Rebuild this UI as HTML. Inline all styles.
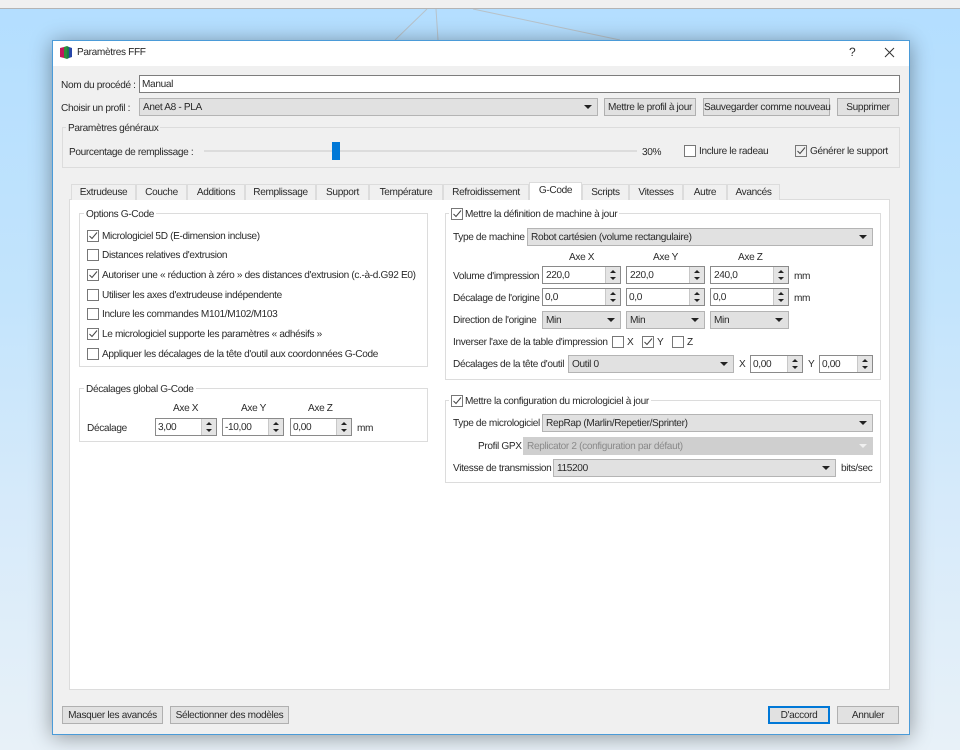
<!DOCTYPE html>
<html lang="fr"><head><meta charset="utf-8"><title>Paramètres FFF</title>
<style>
*{box-sizing:border-box}
html{margin:0;padding:0;background:#b5dfff}
body{margin:0;padding:0;width:960px;height:750px;position:relative;overflow:hidden;font:10.1px/16px "Liberation Sans",sans-serif;letter-spacing:-.35px;text-rendering:geometricPrecision;color:#2a2a2a;background:linear-gradient(180deg,#b3deff 0,#c3e4fc 300px,#d6eafa 500px,#e8f1f8 750px);filter:blur(.3px)}
#top{position:absolute;left:0;top:0;width:960px;height:9px;background:#f0f0f0;border-bottom:1px solid #b4b4b4}
#dlg{position:absolute;left:52px;top:40px;width:858px;height:695px;background:#f0f0f0;box-shadow:0 2px 20px rgba(0,0,0,.38)}
#bd{position:absolute;left:52px;top:40px;width:858px;height:695px;border:1px solid #4b9bd8;z-index:5}
#tb{position:absolute;left:53px;top:41px;width:856px;height:25px;background:#fff}
.a{position:absolute}
.t{position:absolute;white-space:nowrap;height:14px}
.g{position:absolute;border:1px solid #dcdcdc}
.gt{position:absolute;white-space:nowrap;height:14px;background:#f0f0f0;padding:0 2px}
.w{background:#fff}
.in{position:absolute;background:#fff;border:1px solid #7d7d7d;height:18px;padding:1px 0 0 2px;white-space:nowrap}
.c{position:absolute;background:#e1e1e1;border:1px solid #b4b4b4;height:18px;padding:1px 0 0 3px;white-space:nowrap}
.c:after{content:"";position:absolute;right:5px;top:6px;border:4px solid transparent;border-top:4px solid #222;border-bottom:0}
.c.d{color:#8a8a8a;background:#cfcfcf;border-color:#cfcfcf}
.c.d:after{border-top-color:#f0f0f0}
.b{position:absolute;background:#e1e1e1;border:1px solid #b0b0b0;height:18px;text-align:center;padding-top:1px;white-space:nowrap}
.s{position:absolute;background:#fff;border:1px solid #8a8a8a;height:18px;padding:1px 0 0 2px;white-space:nowrap}
.s:after{content:"";position:absolute;right:0;top:0;bottom:0;width:14px;background:#e4e4e4;border-left:1px solid #c8c8c8}
.s i{position:absolute;right:4px;z-index:1;border:3px solid transparent}
.s i.u{top:3px;border-bottom:3px solid #222;border-top:0}
.s i.o{bottom:3px;border-top:3px solid #222;border-bottom:0}
.k{position:absolute;width:12px;height:12px;background:#fff;border:1px solid #777}
.k.on svg{position:absolute;left:0;top:0}
.k.bg{background:#f0f0f0}
.tab{position:absolute;top:184px;height:16px;background:#f0f0f0;border:1px solid #dcdcdc;border-bottom:0;margin-left:-1px;text-align:center;white-space:nowrap;padding-top:0}
</style></head><body>
<div id="top"></div>
<svg class="a" style="left:0;top:9px" width="960" height="32"><path d="M427 0L395 31M436 0L438 31M473 0L620 31" stroke="#b8c2c9" stroke-width="1" fill="none"/></svg>
<div id="dlg"></div><div id="tb"></div><div id="bd"></div>

<svg class="a" style="left:60px;top:46px" width="13" height="13"><path d="M0 2L4 1V12L0 11Z" fill="#c2185b"/><path d="M4 1L7 0V13L4 12Z" fill="#2f8f3a"/><path d="M7 0L9 1V12L7 13Z" fill="#1b7d4a"/><path d="M9 1L12 2V11L9 12Z" fill="#2746a8"/></svg>
<div class="t" style="left:77px;top:45px">Paramètres FFF</div>
<div class="t" style="left:849px;top:44px;font-size:12px">?</div>
<svg class="a" style="left:884px;top:47px" width="11" height="11"><path d="M1 1L10 10M10 1L1 10" stroke="#333" stroke-width="1" fill="none"/></svg>

<div class="t" style="left:61px;top:78px">Nom du procédé :</div>
<div class="in" style="left:139px;top:75px;width:761px">Manual</div>
<div class="t" style="left:61px;top:101px">Choisir un profil :</div>
<div class="c" style="left:139px;top:98px;width:459px;padding-left:3px">Anet A8 - PLA</div>
<div class="b" style="left:604px;top:98px;width:92px">Mettre le profil à jour</div>
<div class="b" style="left:703px;top:98px;width:127px">Sauvegarder comme nouveau</div>
<div class="b" style="left:837px;top:98px;width:62px">Supprimer</div>

<div class="g" style="left:62px;top:127px;width:838px;height:41px"></div>
<div class="gt" style="left:66px;top:121px">Paramètres généraux</div>
<div class="t" style="left:69px;top:145px">Pourcentage de remplissage :</div>
<div class="a" style="left:204px;top:150px;width:433px;height:2px;background:#dcdcdc"></div>
<div class="a" style="left:332px;top:142px;width:8px;height:18px;background:#0078d7"></div>
<div class="t" style="left:642px;top:145px">30%</div>
<div class="k" style="left:684px;top:145px"></div>
<div class="t" style="left:699px;top:144px">Inclure le radeau</div>
<div class="k on bg" style="left:795px;top:145px"><svg width="10" height="10"><path d="M1.5 5L4 7.5L9 1.5" stroke="#444" fill="none"/></svg></div>
<div class="t" style="left:810px;top:144px">Générer le support</div>

<div class="a w" style="left:69px;top:199px;width:821px;height:491px;border:1px solid #dcdcdc"></div>
<div class="tab" style="left:72px;width:65px">Extrudeuse</div>
<div class="tab" style="left:137px;width:51px">Couche</div>
<div class="tab" style="left:188px;width:58px">Additions</div>
<div class="tab" style="left:246px;width:71px">Remplissage</div>
<div class="tab" style="left:317px;width:53px">Support</div>
<div class="tab" style="left:370px;width:74px">Température</div>
<div class="tab" style="left:444px;width:86px">Refroidissement</div>
<div class="tab" style="left:530px;top:182px;width:53px;height:18px;background:#fff;z-index:2">G-Code</div>
<div class="tab" style="left:583px;width:47px">Scripts</div>
<div class="tab" style="left:630px;width:54px">Vitesses</div>
<div class="tab" style="left:684px;width:44px">Autre</div>
<div class="tab" style="left:728px;width:53px">Avancés</div>

<div class="g" style="left:79px;top:213px;width:349px;height:154px"></div>
<div class="gt w" style="left:84px;top:207px">Options G-Code</div>
<div class="k on" style="left:87px;top:230px"><svg width="10" height="10"><path d="M1.5 5L4 7.5L9 1.5" stroke="#444" fill="none"/></svg></div>
<div class="t" style="left:102px;top:229px">Micrologiciel 5D (E-dimension incluse)</div>
<div class="k" style="left:87px;top:249px"></div>
<div class="t" style="left:102px;top:248px">Distances relatives d'extrusion</div>
<div class="k on" style="left:87px;top:269px"><svg width="10" height="10"><path d="M1.5 5L4 7.5L9 1.5" stroke="#444" fill="none"/></svg></div>
<div class="t" style="left:102px;top:268px">Autoriser une « réduction à zéro » des distances d'extrusion (c.-à-d.G92 E0)</div>
<div class="k" style="left:87px;top:289px"></div>
<div class="t" style="left:102px;top:288px">Utiliser les axes d'extrudeuse indépendente</div>
<div class="k" style="left:87px;top:308px"></div>
<div class="t" style="left:102px;top:307px">Inclure les commandes M101/M102/M103</div>
<div class="k on" style="left:87px;top:328px"><svg width="10" height="10"><path d="M1.5 5L4 7.5L9 1.5" stroke="#444" fill="none"/></svg></div>
<div class="t" style="left:102px;top:327px">Le micrologiciel supporte les paramètres « adhésifs »</div>
<div class="k" style="left:87px;top:348px"></div>
<div class="t" style="left:102px;top:347px">Appliquer les décalages de la tête d'outil aux coordonnées G-Code</div>

<div class="g" style="left:79px;top:388px;width:349px;height:54px"></div>
<div class="gt w" style="left:84px;top:382px">Décalages global G-Code</div>
<div class="t" style="left:173px;top:401px">Axe X</div>
<div class="t" style="left:241px;top:401px">Axe Y</div>
<div class="t" style="left:308px;top:401px">Axe Z</div>
<div class="t" style="left:87px;top:421px">Décalage</div>
<div class="s" style="left:155px;top:418px;width:62px">3,00<i class="u"></i><i class="o"></i></div>
<div class="s" style="left:222px;top:418px;width:62px">-10,00<i class="u"></i><i class="o"></i></div>
<div class="s" style="left:290px;top:418px;width:62px">0,00<i class="u"></i><i class="o"></i></div>
<div class="t" style="left:357px;top:421px">mm</div>

<div class="g" style="left:445px;top:213px;width:436px;height:167px"></div>
<div class="gt w" style="left:449px;top:207px;padding-left:16px">Mettre la définition de machine à jour</div>
<div class="k on" style="left:451px;top:208px"><svg width="10" height="10"><path d="M1.5 5L4 7.5L9 1.5" stroke="#444" fill="none"/></svg></div>
<div class="t" style="left:453px;top:230px">Type de machine</div>
<div class="c" style="left:527px;top:228px;width:346px">Robot cartésien (volume rectangulaire)</div>
<div class="t" style="left:569px;top:250px">Axe X</div>
<div class="t" style="left:653px;top:250px">Axe Y</div>
<div class="t" style="left:738px;top:250px">Axe Z</div>
<div class="t" style="left:453px;top:269px">Volume d'impression</div>
<div class="s" style="left:542px;top:266px;width:79px;padding-left:3px">220,0<i class="u"></i><i class="o"></i></div>
<div class="s" style="left:626px;top:266px;width:79px;padding-left:3px">220,0<i class="u"></i><i class="o"></i></div>
<div class="s" style="left:710px;top:266px;width:79px;padding-left:3px">240,0<i class="u"></i><i class="o"></i></div>
<div class="t" style="left:794px;top:269px">mm</div>
<div class="t" style="left:453px;top:291px">Décalage de l'origine</div>
<div class="s" style="left:542px;top:288px;width:79px">0,0<i class="u"></i><i class="o"></i></div>
<div class="s" style="left:626px;top:288px;width:79px">0,0<i class="u"></i><i class="o"></i></div>
<div class="s" style="left:710px;top:288px;width:79px">0,0<i class="u"></i><i class="o"></i></div>
<div class="t" style="left:794px;top:291px">mm</div>
<div class="t" style="left:453px;top:313px">Direction de l'origine</div>
<div class="c" style="left:542px;top:311px;width:79px">Min</div>
<div class="c" style="left:626px;top:311px;width:79px">Min</div>
<div class="c" style="left:710px;top:311px;width:79px">Min</div>
<div class="t" style="left:453px;top:335px">Inverser l'axe de la table d'impression</div>
<div class="k" style="left:612px;top:336px"></div>
<div class="t" style="left:627px;top:335px">X</div>
<div class="k on" style="left:642px;top:336px"><svg width="10" height="10"><path d="M1.5 5L4 7.5L9 1.5" stroke="#444" fill="none"/></svg></div>
<div class="t" style="left:657px;top:335px">Y</div>
<div class="k" style="left:672px;top:336px"></div>
<div class="t" style="left:687px;top:335px">Z</div>
<div class="t" style="left:453px;top:357px">Décalages de la tête d'outil</div>
<div class="c" style="left:568px;top:355px;width:166px">Outil 0</div>
<div class="t" style="left:739px;top:357px">X</div>
<div class="s" style="left:750px;top:355px;width:53px">0,00<i class="u"></i><i class="o"></i></div>
<div class="t" style="left:808px;top:357px">Y</div>
<div class="s" style="left:819px;top:355px;width:54px">0,00<i class="u"></i><i class="o"></i></div>

<div class="g" style="left:445px;top:400px;width:436px;height:83px"></div>
<div class="gt w" style="left:449px;top:394px;padding-left:16px">Mettre la configuration du micrologiciel à jour</div>
<div class="k on" style="left:451px;top:395px"><svg width="10" height="10"><path d="M1.5 5L4 7.5L9 1.5" stroke="#444" fill="none"/></svg></div>
<div class="t" style="left:453px;top:416px">Type de micrologiciel</div>
<div class="c" style="left:542px;top:414px;width:331px">RepRap (Marlin/Repetier/Sprinter)</div>
<div class="t" style="left:478px;top:439px">Profil GPX</div>
<div class="c d" style="left:523px;top:437px;width:350px">Replicator 2 (configuration par défaut)</div>
<div class="t" style="left:453px;top:461px">Vitesse de transmission</div>
<div class="c" style="left:553px;top:459px;width:283px">115200</div>
<div class="t" style="left:841px;top:461px">bits/sec</div>

<div class="b" style="left:62px;top:706px;width:101px">Masquer les avancés</div>
<div class="b" style="left:170px;top:706px;width:119px">Sélectionner des modèles</div>
<div class="b" style="left:768px;top:706px;width:62px;border:2px solid #0078d7;padding-top:0">D'accord</div>
<div class="b" style="left:837px;top:706px;width:62px">Annuler</div>
</body></html>
